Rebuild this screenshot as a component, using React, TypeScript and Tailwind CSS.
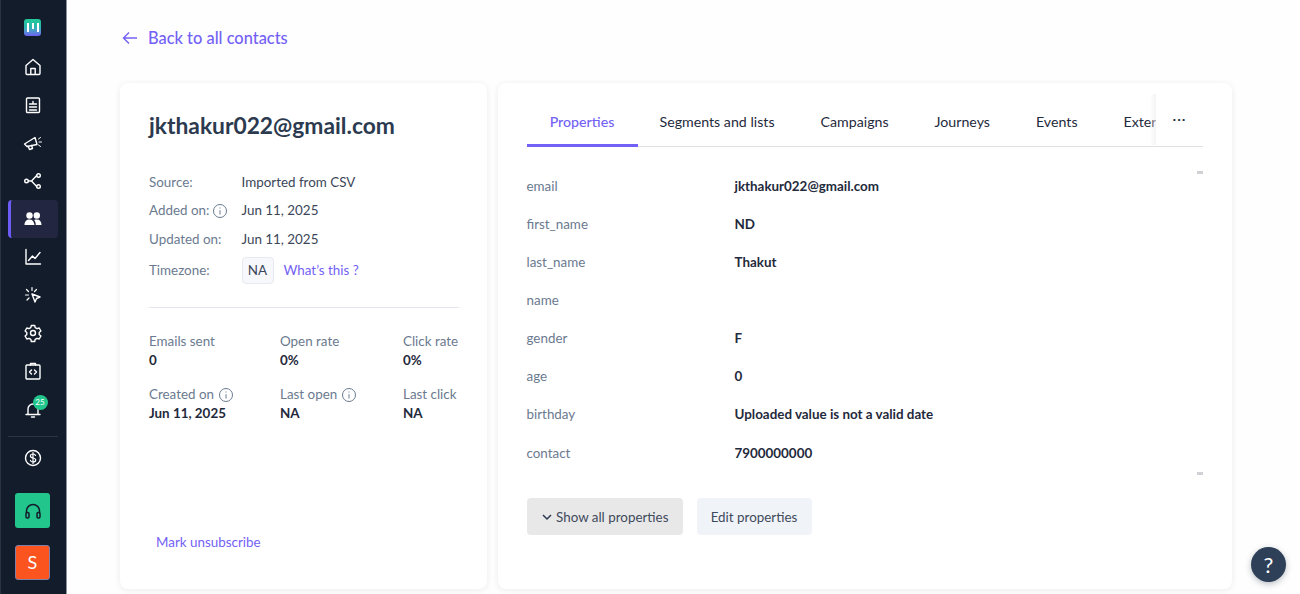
import React from "react";

function NavIcon({ children }: { children: React.ReactNode }) {
  return (
    <svg width="20" height="20" viewBox="0 0 20 20" fill="none" stroke="currentColor" strokeWidth="1.4" strokeLinecap="round" strokeLinejoin="round">
      {children}
    </svg>
  );
}

function InfoIcon() {
  return (
    <svg width="14" height="14" viewBox="0 0 14 14" fill="none" stroke="#6b7a8f" strokeWidth="1" className="shrink-0">
      <circle cx="7" cy="7" r="6.500" />
      <path d="M7 6.2V10.500M7 3.500v1" />
    </svg>
  );
}

const navItems = [
  { icon: <path d="M10 2.5 3 8.500v8a1 1 0 0 0 1 1h12a1 1 0 0 0 1-1v-8zM7.800 17.500v-6h4.400v6" /> },
  { icon: <><rect x="3.500" y="3" width="13" height="14.500" rx="1" /><path d="M6.500 9h7M6.500 12h7M6.500 15h7M10 6.500V9" /></> },
  { icon: <><path d="M1.500 11 12 4.500l2 7-10 2zM5 13l1.500 3.500 3-1-.8-3" /><path d="M15.500 6l2-1.500M16 9h2.500M15.500 12l2 1.500" strokeWidth="1" /></> },
  { icon: <><circle cx="3.500" cy="10" r="1.800" /><circle cx="15.500" cy="4.500" r="1.800" /><circle cx="15.500" cy="15.500" r="1.800" /><path d="M5.300 10h3.200l5.200-5.500M8.500 10l5.200 5.500" /></> },
];
const navItemsAfter = [
  { icon: <><path d="M3 2.500V17h14.500" /><path d="M5.500 13.500 9.500 9l2.500 2.500 5-6" /></> },
  { icon: <><path d="m9 9 8 3-3.500 1.500L12 17z" /><path d="M9 2.500v3M3.500 4.500 5.500 6.500M2.500 10h3M4 15l2-2M13.500 4.500l-2 2" strokeWidth="1.200" /></> },
  { icon: <><path d="M8.300 2.500h3.400l.5 2.200 1.800 1 2.200-.7 1.700 3-1.700 1.500v2l1.700 1.500-1.700 3-2.200-.7-1.800 1-.5 2.200H8.300l-.5-2.200-1.800-1-2.200.7-1.700-3 1.700-1.500v-2L2.100 8l1.700-3 2.200.7 1.800-1z" /><circle cx="10" cy="10" r="2.500" /></> },
  { icon: <><rect x="3" y="4" width="14" height="14" rx="1" /><path d="M7.500 4V2.500h5V4M8.500 9 6.500 11l2 2M11.500 9l2 2-2 2" /></> },
];

const props = [
  ["email", "jkthakur022@gmail.com"],
  ["first_name", "ND"],
  ["last_name", "Thakut"],
  ["name", ""],
  ["gender", "F"],
  ["age", "0"],
  ["birthday", "Uploaded value is not a valid date"],
  ["contact", "7900000000"],
];

const tabs = ["Segments and lists", "Campaigns", "Journeys", "Events", "External"];

function Sidebar() {
  return (
    <aside className="w-[67px] h-[594px] shrink-0 bg-[#131c2b] border-l border-l-[#2b3340] border-r border-r-[#8c929b] flex flex-col items-center text-white pt-2 pr-[2px]">
      <div className="h-[38px] flex items-center justify-center">
        <div className="w-[17px] h-[17px] rounded-[3px] bg-gradient-to-b from-[#22c997] via-[#2bb5b0] to-[#6c5cf5] flex items-start justify-center gap-[3px] pt-[4px]">
          <span className="w-[2px] h-[9px] bg-white" />
          <span className="w-[2px] h-[6px] bg-white" />
          <span className="w-[2px] h-[9px] bg-white" />
        </div>
      </div>
      <div className="h-[2px]" />
      {navItems.map((n, i) => (
        <div key={i} className="h-[38px] flex items-center justify-center">
          <NavIcon>{n.icon}</NavIcon>
        </div>
      ))}
      <div className="w-[50px] h-[38px] bg-[#232640] rounded-[4px] border-l-[3px] border-[#6c5cf5] flex items-center justify-center pr-[3px]">
        <svg width="20" height="20" viewBox="0 0 20 20" fill="#fff">
          <circle cx="6.500" cy="6.500" r="3.200" />
          <circle cx="13.800" cy="6.500" r="3.200" />
          <path d="M1.500 16c0-3.500 2-5.500 5-5.500s4.500 2 5 5.500zM12.800 16c0-2-.6-3.800-1.600-5 .8-.4 1.600-.5 2.600-.5 3 0 4.700 2 4.700 5.500z" />
        </svg>
      </div>
      {navItemsAfter.map((n, i) => (
        <div key={i} className="h-[38px] flex items-center justify-center">
          <NavIcon>{n.icon}</NavIcon>
        </div>
      ))}
      <div className="relative h-[38px] flex items-center justify-center">
        <NavIcon>
          <path d="M3 15.500h14M5 15.500V10a5 5 0 0 1 10 0v5.500M8.500 18h3" />
        </NavIcon>
        <span className="absolute left-[10px] top-[5px] w-[15px] h-[15px] rounded-full bg-[#22c58b] text-[8px] leading-[15px] text-center text-white">
          25
        </span>
      </div>
      <div className="w-[50px] border-t border-[#2b3444] mt-[8px]" />
      <div className="h-[42px] flex items-center justify-center">
        <NavIcon>
          <circle cx="10" cy="10" r="7.500" />
          <path d="M12.500 7.500c-.3-1-1.300-1.500-2.500-1.500-1.500 0-2.600.8-2.600 2s1 1.700 2.600 2 2.700.8 2.700 2-1.200 2-2.700 2c-1.300 0-2.300-.6-2.600-1.600M10 4.500v11" strokeWidth="1.200" />
        </NavIcon>
      </div>
      <div className="w-[35px] h-[35px] mt-[14px] rounded-[3px] bg-[#22c58b] flex items-center justify-center text-[#131c2b]">
        <svg width="20" height="20" viewBox="0 0 20 20" fill="none" stroke="currentColor" strokeWidth="1.500">
          <path d="M3.500 12v-2a6.500 6.500 0 0 1 13 0v2" />
          <rect x="3" y="11.500" width="3" height="5.500" rx="1.200" />
          <rect x="14" y="11.500" width="3" height="5.500" rx="1.200" />
        </svg>
      </div>
      <div className="w-[35px] h-[35px] mt-[17px] rounded-[3px] bg-[#fb541e] border border-[#7f7fa8] flex items-center justify-center text-white text-[18px]">
        S
      </div>
    </aside>
  );
}

function Stat({ label, value, info }: { label: string; value: string; info?: boolean }) {
  return (
    <div className="whitespace-nowrap">
      <div className="flex items-center gap-[5px] text-[#6b7a8f] text-[13.4px] leading-[19px]">
        {label}
        {info && <InfoIcon />}
      </div>
      <div className="font-bold text-[#1f2a3c] text-[13.4px] leading-[19px]">{value}</div>
    </div>
  );
}

function Meta({ label, children, info }: { label: string; children: React.ReactNode; info?: boolean }) {
  return (
    <div className="flex items-center">
      <div className="w-[92.500px] flex items-center gap-[4px] text-[#6b7a8f]">
        {label}
        {info && <InfoIcon />}
      </div>
      <div className="flex items-center text-[#3b4658]">{children}</div>
    </div>
  );
}

function ContactCard() {
  return (
    <section className="w-[367px] h-[506px] bg-white rounded-[8px] shadow-[0_1px_6px_rgba(30,40,60,0.09)] pl-[29px] pr-[28px] pt-[28px] flex flex-col">
      <h1 className="text-[22.8px] leading-[29px] font-bold text-[#2c3a4f]">jkthakur022@gmail.com</h1>
      <div className="mt-[28px] flex flex-col text-[13.4px] leading-[19px]">
        <div className="h-[28px] flex items-center"><Meta label="Source:">Imported from CSV</Meta></div>
        <div className="h-[29px] flex items-center"><Meta label="Added on:" info>Jun 11, 2025</Meta></div>
        <div className="h-[28px] flex items-center"><Meta label="Updated on:">Jun 11, 2025</Meta></div>
        <div className="h-[35px] flex items-center">
          <Meta label="Timezone:">
            <span className="w-[32px] h-[27px] bg-[#f7f8fb] border border-[#e6e9ef] rounded-[4px] flex items-center justify-center text-[#3b4658]">NA</span>
            <a className="ml-[10px] text-[#7361f5]">What’s this ?</a>
          </Meta>
        </div>
      </div>
      <div className="border-t border-[#e4e7ec] mt-[19px]" />
      <div className="mt-[24px] grid grid-cols-[131px_123px_1fr] gap-y-[15px]">
        <Stat label="Emails sent" value="0" />
        <Stat label="Open rate" value="0%" />
        <Stat label="Click rate" value="0%" />
        <Stat label="Created on" value="Jun 11, 2025" info />
        <Stat label="Last open" value="NA" info />
        <Stat label="Last click" value="NA" />
      </div>
      <a className="mt-[110px] ml-[7px] text-[13.4px] leading-[19px] text-[#7361f5]">Mark unsubscribe</a>
    </section>
  );
}

function PropertiesCard() {
  return (
    <section className="w-[734px] h-[506px] bg-white rounded-[8px] shadow-[0_1px_6px_rgba(30,40,60,0.09)] pl-[28.500px] pr-[29px] pt-[11px] ml-[11px] flex flex-col">
      <div className="h-[53px] border-b border-[#e0e1e5] flex text-[14.2px] text-[#1f2a3c] whitespace-nowrap">
        <div className="w-[111px] h-[53px] pt-[6px] border-b-[3px] border-[#7361f5] text-[#7361f5] flex items-center justify-center font-medium shrink-0">Properties</div>
        <div className="flex-1 min-w-0 overflow-hidden flex items-center h-[52px] pt-[3px] pl-[22px] gap-[46px]">
          {tabs.map((t) => <span key={t}>{t}</span>)}
        </div>
        <div className="relative w-[47px] shrink-0 h-[52px] bg-white flex justify-center pt-[18px] leading-[14px] tracking-[1px] text-[#1f2a3c]">
          <span className="absolute -left-[6px] top-0 w-[6px] h-[51px] bg-gradient-to-r from-transparent to-[#eeeeef]/70" />
          ···
        </div>
      </div>
      <div className="relative mt-[19.500px] flex flex-col text-[13.4px]">
        <span className="absolute right-0 top-[4px] w-[6px] h-[3px] bg-[#cfd1d5]" />
        <span className="absolute right-0 top-[305px] w-[6px] h-[3px] bg-[#cfd1d5]" />
        {props.map(([k, v]) => (
          <div key={k} className="h-[38.150px] flex items-center">
            <div className="w-[208px] text-[#6b7a8f]">{k}</div>
            <div className="font-bold text-[#1f2a3c]">{v}</div>
          </div>
        ))}
      </div>
      <div className="mt-[26.500px] flex gap-[13.500px] text-[13.4px] text-[#3f4a5c]">
        <button className="w-[156.500px] h-[37px] bg-[#e8e8e8] rounded-[4px] flex items-center justify-center gap-[3px]">
          <svg width="12" height="12" viewBox="0 0 12 12" fill="none" stroke="#2c3a4f" strokeWidth="1.500">
            <path d="m2 4 4 4 4-4" />
          </svg>
          Show all properties
        </button>
        <button className="w-[115px] h-[37px] bg-[#f0f3f8] rounded-[4px]">Edit properties</button>
      </div>
    </section>
  );
}

export default function App() {
  return (
    <div className="relative w-[1300px] h-[594px] overflow-hidden bg-[#fefefe] flex font-['Lato',sans-serif]">
      <Sidebar />
      <main className="pl-[53px] flex-1">
        <div className="h-[83px] pb-[7px] flex items-center gap-[10px] text-[#7361f5] text-[16.4px] font-medium">
          <svg width="16" height="14" viewBox="0 0 16 14" fill="none" stroke="#7361f5" strokeWidth="1.400" className="ml-[2px]">
            <path d="M15 7H1.500M7 1.500 1.500 7 7 12.500" />
          </svg>
          Back to all contacts
        </div>
        <div className="flex">
          <ContactCard />
          <PropertiesCard />
        </div>
      </main>
      <button className="absolute left-[1251px] top-[547px] w-[35px] h-[35px] rounded-full bg-[#2e4058] text-white text-[22px] leading-[35px] font-normal shadow-[0_2px_6px_rgba(30,40,60,0.3)]">?</button>
    </div>
  );
}
